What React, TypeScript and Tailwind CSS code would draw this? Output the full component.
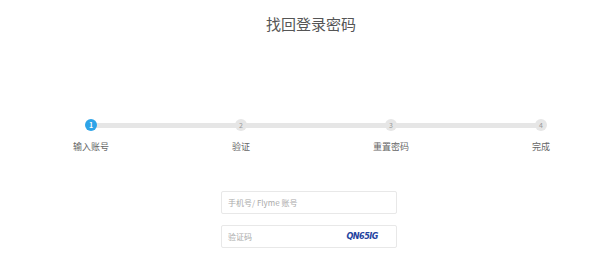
import React from "react";

const steps = ["输入账号", "验证", "重置密码", "完成"];

export default function App() {
  return (
    <div
      className="w-[600px] h-[262px] overflow-hidden bg-white"
      style={{ fontFamily: '"Noto Sans CJK SC", "Liberation Sans", sans-serif' }}
    >
      {/* title */}
      <h1 className="pt-[13px] pl-[22px] text-center text-[15px] leading-[22px] text-[#555]">找回登录密码</h1>

      {/* steps */}
      <div className="mt-[84px] ml-[85px] w-[462px] flex items-start">
        {steps.map((label, i) => (
          <React.Fragment key={label}>
            {i > 0 && <div className="flex-1 h-[5px] mt-[3.5px] -mx-[1px] bg-[#e6e6e6]" />}
            <div className="relative z-10 w-[12px] flex flex-col items-center">
              <div
                className={
                  i === 0
                    ? "w-[12px] h-[12px] rounded-full bg-[#2ea4e8] text-white text-[7px] leading-[12px] text-center font-bold"
                    : "w-[12px] h-[12px] rounded-full bg-[#e6e6e6] text-[#999] text-[7px] leading-[12px] text-center"
                }
              >
                {i + 1}
              </div>
              <span className="mt-[9px] whitespace-nowrap text-[9px] leading-[13px] text-[#666]">{label}</span>
            </div>
          </React.Fragment>
        ))}
      </div>

      {/* form */}
      <div className="mt-[38px] ml-[221px] w-[176px] flex flex-col gap-[11px]">
        <div className="h-[23px] border border-[#e8e8e8] rounded-[2px] flex items-center px-[6px]">
          <span className="text-[8px] text-[#aaa]">手机号/ Flyme 账号</span>
        </div>
        <div className="h-[23px] border border-[#e8e8e8] rounded-[2px] flex items-center px-[6px]">
          <span className="text-[8px] text-[#aaa] flex-1">验证码</span>
          <span
            className="mr-[12px] text-[9px] italic font-bold text-[#1f44a0] tracking-[-0.5px]"
            style={{ fontFamily: '"DejaVu Sans Condensed", "Liberation Sans", sans-serif' }}
          >
            QN65IG
          </span>
        </div>
      </div>
    </div>
  );
}
